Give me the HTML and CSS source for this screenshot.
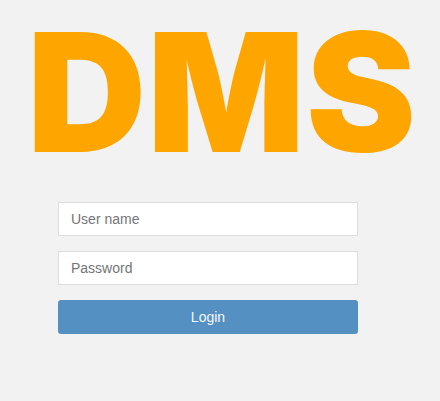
FILE: index.html
```html
<!DOCTYPE html>
<html>
<head>
<meta charset="utf-8">
<link rel="stylesheet" href="styles.css">
</head>
<body>
<div class="page">
  <div class="logo">DMS</div>
  <form class="login">
    <input class="field" type="text" placeholder="User name">
    <input class="field" type="password" placeholder="Password">
    <button class="btn" type="button">Login</button>
  </form>
</div>
</body>
</html>
```
FILE: styles.css
```css
html, body {
  margin: 0;
  padding: 0;
  background: #f2f2f2;
  font-family: "Liberation Sans", Arial, sans-serif;
}
.page {
  display: flex;
  flex-direction: column;
}
.logo {
  font-family: Inter, "Liberation Sans", sans-serif;
  font-weight: 900;
  font-size: 165px;
  line-height: 200px;
  margin-top: -8px;
  letter-spacing: 1px;
  color: #ffa500;
  padding-left: 27px;
  white-space: nowrap;
}
.login {
  margin: 10px 0 0 58px;
  width: 300px;
  display: flex;
  flex-direction: column;
  gap: 15px;
}
.field {
  box-sizing: border-box;
  height: 34px;
  width: 300px;
  margin: 0;
  padding: 0 12px;
  border: 1px solid #dddddd;
  border-radius: 0;
  background: #ffffff;
  font-family: "Liberation Sans", Arial, sans-serif;
  font-size: 14px;
  color: #555;
  outline: none;
}
.field::placeholder {
  color: #757575;
  opacity: 1;
}
.btn {
  box-sizing: border-box;
  height: 34px;
  width: 300px;
  margin: 0;
  padding: 0;
  border: none;
  border-radius: 3px;
  background: #5590c3;
  color: #f4f8fc;
  font-family: "Liberation Sans", Arial, sans-serif;
  font-size: 14px;
}
```
